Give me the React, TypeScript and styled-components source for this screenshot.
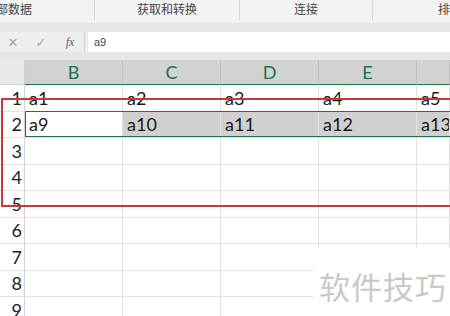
import React from "react";
import styled, { createGlobalStyle } from "styled-components";

const GlobalStyle = createGlobalStyle`
  html, body {
    margin: 0;
    padding: 0;
    background: #ffffff;
    overflow: hidden;
  }
  body {
    font-family: "Lato", "Noto Sans CJK SC", sans-serif;
  }
`;

const Page = styled.div`
  width: 450px;
  height: 316px;
  position: relative;
  overflow: hidden;
  background: #e6e6e6;
`;

const Ribbon = styled.div`
  height: 23px;
  background: #f3f3f3;
  display: grid;
  grid-template-columns: 95px 145px 133px 1fr;
  border-bottom: 1px solid #e2e2e2;
`;

const Group = styled.div<{ $align?: string }>`
  display: flex;
  align-items: flex-end;
  justify-content: ${(p) => p.$align || "center"};
  padding-bottom: 3px;
  font-family: "Noto Sans CJK SC", sans-serif;
  font-size: 12px;
  color: #444;
  border-right: 1px solid #d6d6d6;
  margin: 0 0 3px;
  overflow: hidden;
  white-space: nowrap;
  &:last-child {
    border-right: none;
  }
`;

const FormulaRow = styled.div`
  margin-top: 8px;
  height: 20px;
  display: flex;
  background: #eeeeee;
`;

const FxTools = styled.div`
  width: 84px;
  display: flex;
  align-items: center;
  gap: 0;
  border-right: 1px solid #d4d4d4;
`;

const Tool = styled.span<{ $w: number }>`
  width: ${(p) => p.$w}px;
  text-align: center;
  color: #a6a6a6;
  font-size: 13px;
  font-family: "DejaVu Sans", sans-serif;
`;

const FxLabel = styled.span`
  width: 28px;
  text-align: center;
  font-family: "Liberation Serif", serif;
  font-style: italic;
  font-size: 12px;
  color: #666;
`;

const FormulaInput = styled.div`
  flex: 1;
  margin-left: 3px;
  background: #ffffff;
  font-family: "Liberation Sans", sans-serif;
  font-size: 11px;
  color: #444;
  display: flex;
  align-items: center;
  padding-left: 6px;
`;

const Sheet = styled.div`
  margin-top: 8px;
  display: grid;
  grid-template-columns: 25px repeat(4, 98px) 1fr;
  grid-template-rows: 25px repeat(9, 26.5px);
  background: #ffffff;
  position: relative;
`;

const Corner = styled.div`
  background: #e9e9e9;
  border-right: 1px solid #d0d0d0;
  border-bottom: 1px solid #d0d0d0;
`;

const ColHead = styled.div`
  background: #d2d2d2;
  color: #217346;
  font-size: 18px;
  display: flex;
  align-items: center;
  justify-content: center;
  border-right: 1px solid #bdbdbd;
  border-bottom: 1.5px solid #217346;
`;

const RowHead = styled.div`
  background: #ffffff;
  color: #222;
  font-size: 18px;
  display: flex;
  align-items: center;
  justify-content: flex-end;
  padding-right: 2px;
  border-right: 1px solid #d4d4d4;
  border-bottom: 1px solid #e2e2e2;
`;

const Cell = styled.div<{ $shade?: boolean }>`
  background: ${(p) => (p.$shade ? "#d0d0d0" : "#ffffff")};
  color: #1a1a1a;
  font-size: 18px;
  display: flex;
  align-items: center;
  padding-left: 4px;
  border-right: 1px solid #e0e0e0;
  border-bottom: 1px solid #e2e2e2;
  white-space: nowrap;
  overflow: hidden;
`;

const Selection = styled.div`
  position: absolute;
  left: 25px;
  right: 0;
  top: 51px;
  height: 26px;
  border: 1.5px solid #217346;
  border-right: none;
  box-sizing: border-box;
  pointer-events: none;
`;

const Highlight = styled.div`
  position: absolute;
  left: 1px;
  right: -4px;
  top: 38px;
  height: 109px;
  border: 2px solid #c8373b;
  box-sizing: border-box;
  pointer-events: none;
`;

const Watermark = styled.div`
  position: absolute;
  left: 313px;
  top: 188px;
  right: 0;
  bottom: 0;
  background: #ffffff;
  display: flex;
  align-items: center;
  padding-left: 6px;
  font-family: "Noto Sans CJK SC", sans-serif;
  font-size: 31px;
  letter-spacing: 1px;
  color: #c9c9c9;
`;

const cols = ["B", "C", "D", "E", ""];
const rows: string[][] = [
  ["a1", "a2", "a3", "a4", "a5"],
  ["a9", "a10", "a11", "a12", "a13"],
];

export default function App() {
  return (
    <Page>
      <GlobalStyle />
      <Ribbon>
        <Group $align="flex-start">
          <span style={{ marginLeft: -4 }}>部数据</span>
        </Group>
        <Group>获取和转换</Group>
        <Group>连接</Group>
        <Group $align="flex-end">排</Group>
      </Ribbon>
      <FormulaRow>
        <FxTools>
          <Tool $w={26}>✕</Tool>
          <Tool $w={30}>✓</Tool>
          <FxLabel>fx</FxLabel>
        </FxTools>
        <FormulaInput>a9</FormulaInput>
      </FormulaRow>
      <Sheet>
        <Corner />
        {cols.map((c, i) => (
          <ColHead key={i}>{c}</ColHead>
        ))}
        {Array.from({ length: 9 }, (_, r) => (
          <React.Fragment key={r}>
            <RowHead>{r + 1}</RowHead>
            {cols.map((_, c) => (
              <Cell key={c} $shade={r === 1 && c > 0}>
                {rows[r] ? rows[r][c] : ""}
              </Cell>
            ))}
          </React.Fragment>
        ))}
        <Selection />
        <Highlight />
        <Watermark>软件技巧</Watermark>
      </Sheet>
    </Page>
  );
}
